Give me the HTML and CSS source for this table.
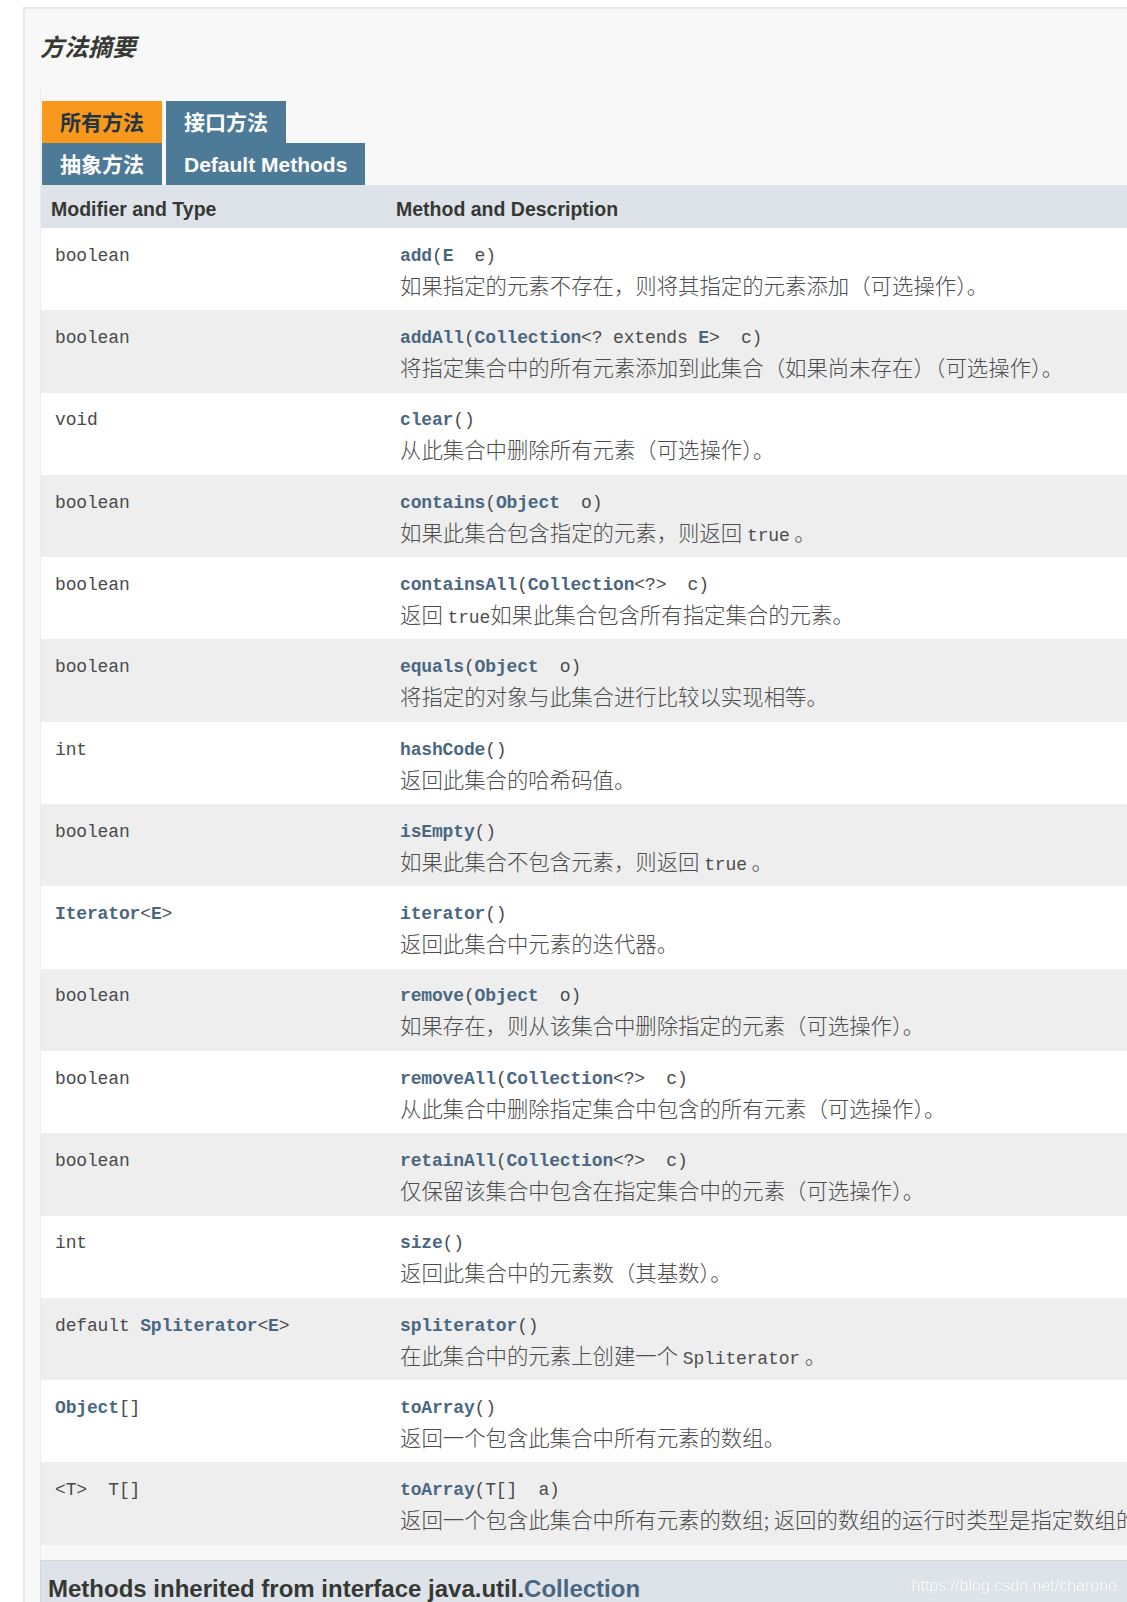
FILE: index.html
```html
<!DOCTYPE html>
<html lang="zh-CN">
<head>
<meta charset="utf-8">
<title>方法摘要</title>
<link rel="stylesheet" href="styles.css">
</head>
<body>
<div class="outer">
  <h3 class="title">方法摘要</h3>
  <div class="inner">
    <div class="tabs">
      <span class="tab active">所有方法</span>
      <span class="tab">接口方法</span>
      <span class="tab">抽象方法</span>
      <span class="tab">Default Methods</span>
    </div>
    <table class="summary">
      <colgroup><col class="col1"><col class="col2"></colgroup>
      <thead>
        <tr><th>Modifier and Type</th><th>Method and Description</th></tr>
      </thead>
      <tbody>
        <tr>
          <td><div class="code">boolean</div></td>
          <td><div class="code"><b class="lk">add</b>(<b class="lk">E</b>&nbsp;&nbsp;e)</div><div class="desc">如果指定的元素不存在，则将其指定的元素添加（可选操作）。</div></td>
        </tr>
        <tr>
          <td><div class="code">boolean</div></td>
          <td><div class="code"><b class="lk">addAll</b>(<b class="lk">Collection</b>&lt;? extends <b class="lk">E</b>&gt;&nbsp;&nbsp;c)</div><div class="desc">将指定集合中的所有元素添加到此集合（如果尚未存在）（可选操作）。</div></td>
        </tr>
        <tr>
          <td><div class="code">void</div></td>
          <td><div class="code"><b class="lk">clear</b>()</div><div class="desc">从此集合中删除所有元素（可选操作）。</div></td>
        </tr>
        <tr>
          <td><div class="code">boolean</div></td>
          <td><div class="code"><b class="lk">contains</b>(<b class="lk">Object</b>&nbsp;&nbsp;o)</div><div class="desc">如果此集合包含指定的元素，则返回 <span class="ic">true</span> 。</div></td>
        </tr>
        <tr>
          <td><div class="code">boolean</div></td>
          <td><div class="code"><b class="lk">containsAll</b>(<b class="lk">Collection</b>&lt;?&gt;&nbsp;&nbsp;c)</div><div class="desc">返回 <span class="ic">true</span>如果此集合包含所有指定集合的元素。</div></td>
        </tr>
        <tr>
          <td><div class="code">boolean</div></td>
          <td><div class="code"><b class="lk">equals</b>(<b class="lk">Object</b>&nbsp;&nbsp;o)</div><div class="desc">将指定的对象与此集合进行比较以实现相等。</div></td>
        </tr>
        <tr>
          <td><div class="code">int</div></td>
          <td><div class="code"><b class="lk">hashCode</b>()</div><div class="desc">返回此集合的哈希码值。</div></td>
        </tr>
        <tr>
          <td><div class="code">boolean</div></td>
          <td><div class="code"><b class="lk">isEmpty</b>()</div><div class="desc">如果此集合不包含元素，则返回 <span class="ic">true</span> 。</div></td>
        </tr>
        <tr>
          <td><div class="code"><b class="lk">Iterator</b>&lt;<b class="lk">E</b>&gt;</div></td>
          <td><div class="code"><b class="lk">iterator</b>()</div><div class="desc">返回此集合中元素的迭代器。</div></td>
        </tr>
        <tr>
          <td><div class="code">boolean</div></td>
          <td><div class="code"><b class="lk">remove</b>(<b class="lk">Object</b>&nbsp;&nbsp;o)</div><div class="desc">如果存在，则从该集合中删除指定的元素（可选操作）。</div></td>
        </tr>
        <tr>
          <td><div class="code">boolean</div></td>
          <td><div class="code"><b class="lk">removeAll</b>(<b class="lk">Collection</b>&lt;?&gt;&nbsp;&nbsp;c)</div><div class="desc">从此集合中删除指定集合中包含的所有元素（可选操作）。</div></td>
        </tr>
        <tr>
          <td><div class="code">boolean</div></td>
          <td><div class="code"><b class="lk">retainAll</b>(<b class="lk">Collection</b>&lt;?&gt;&nbsp;&nbsp;c)</div><div class="desc">仅保留该集合中包含在指定集合中的元素（可选操作）。</div></td>
        </tr>
        <tr>
          <td><div class="code">int</div></td>
          <td><div class="code"><b class="lk">size</b>()</div><div class="desc">返回此集合中的元素数（其基数）。</div></td>
        </tr>
        <tr>
          <td><div class="code">default <b class="lk">Spliterator</b>&lt;<b class="lk">E</b>&gt;</div></td>
          <td><div class="code"><b class="lk">spliterator</b>()</div><div class="desc">在此集合中的元素上创建一个 <span class="ic">Spliterator</span> 。</div></td>
        </tr>
        <tr>
          <td><div class="code"><b class="lk">Object</b>[]</div></td>
          <td><div class="code"><b class="lk">toArray</b>()</div><div class="desc">返回一个包含此集合中所有元素的数组。</div></td>
        </tr>
        <tr>
          <td><div class="code">&lt;T&gt;&nbsp;&nbsp;T[]</div></td>
          <td><div class="code"><b class="lk">toArray</b>(T[]&nbsp;&nbsp;a)</div><div class="desc">返回一个包含此集合中所有元素的数组; 返回的数组的运行时类型是指定数组的运行时类型。</div></td>
        </tr>
      </tbody>
    </table>
    <div class="inherited">
      <h3 class="inh-title">Methods inherited from interface java.util.<span class="inh-link">Collection</span></h3>
    </div>
  </div>
</div>
<div class="watermark">https://blog.csdn.net/charono</div>
</body>
</html>
```

FILE: styles.css
```css
html, body {
  margin: 0;
  padding: 0;
  overflow: hidden;
  background: #ffffff;
}

body {
  width: 1127px;
  height: 1602px;
  font-family: "Liberation Sans", "Noto Sans CJK SC", sans-serif;
  color: #353833;
}

.outer {
  margin: 7px 0 0 23px;
  width: 1400px;
  border-top: 2px solid #e9e9e9;
  border-left: 2px solid #e9e9e9;
  background: #f8f8f8;
  padding: 0 0 0 15px;
  box-sizing: border-box;
}

.title {
  margin: 0;
  padding-top: 23px;
  height: 55px;
  box-sizing: border-box;
  font-size: 24px;
  line-height: 32px;
  font-weight: bold;
  font-style: italic;
  color: #353833;
  font-family: "Liberation Sans", "Noto Sans CJK SC", sans-serif;
}

.inner {
  margin-top: 22px;
  border-left: 1px solid #ececec;
  padding-top: 15px;
}

.tabs {
  display: flex;
  flex-wrap: wrap;
  column-gap: 4px;
  width: 330px;
  margin-left: 1px;
}

.tab {
  display: block;
  height: 42px;
  box-sizing: border-box;
  padding: 2px 18px 0;
  line-height: 40px;
  min-width: 84px;
  text-align: center;
  background: #4d7a97;
  color: #ffffff;
  font-size: 21px;
  font-weight: bold;
  white-space: nowrap;
}

.tab.active {
  background: #f8981d;
  color: #253441;
}

.summary {
  border-collapse: collapse;
  border-spacing: 0;
  table-layout: fixed;
  width: 1300px;
}

.col1 { width: 345px; }
.col2 { width: 955px; }

.summary th {
  background: #dee3e9;
  text-align: left;
  font-size: 19.5px;
  font-weight: bold;
  color: #353833;
  height: 43px;
  box-sizing: border-box;
  padding: 6px 0 0 10px;
  line-height: 37px;
  vertical-align: top;
}

.summary td {
  vertical-align: top;
  padding: 11.8px 0 12.5px 14px;
  background: #ffffff;
}

.summary tbody tr:nth-child(even) td {
  background: #eeeeef;
}

.code {
  font-family: "Liberation Mono", "Noto Sans CJK SC", monospace;
  font-size: 18px;
  letter-spacing: -0.15px;
  line-height: 32px;
  height: 32px;
  color: #4a4a4a;
  white-space: pre;
}

.lk {
  color: #4a6782;
  font-weight: bold;
}

.desc {
  font-family: "Noto Sans CJK SC", sans-serif;
  font-weight: 300;
  font-size: 21.4px;
  line-height: 26px;
  height: 26px;
  color: #4d4d4d;
  white-space: nowrap;
}

.ic {
  font-family: "Liberation Mono", monospace;
  font-size: 18px;
  letter-spacing: -0.15px;
  font-weight: normal;
}

.inherited {
  margin-top: 15px;
  margin-left: -1px;
  background: #dee3e9;
  border: 1px solid #cfd8e1;
  padding: 12px 7px 10px;
}

.inh-title {
  margin: 0;
  font-size: 24px;
  line-height: 32px;
  font-weight: bold;
  color: #353833;
}

.inh-link {
  color: #4a6782;
}

.watermark {
  position: fixed;
  right: 10px;
  bottom: 7px;
  font-family: "Liberation Sans", sans-serif;
  font-size: 16px;
  line-height: 18px;
  color: rgba(255, 255, 255, 0.92);
  text-shadow: 0 0 1px rgba(120, 130, 140, 0.35);
}
```
